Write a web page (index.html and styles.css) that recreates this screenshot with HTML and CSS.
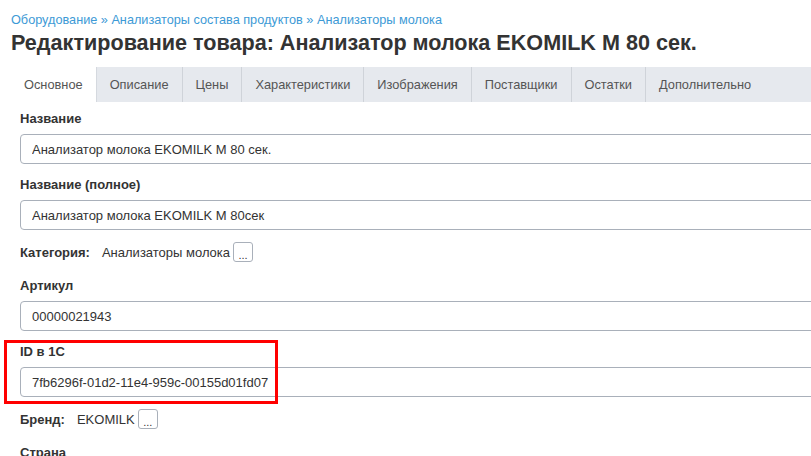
FILE: index.html
```html
<!DOCTYPE html>
<html lang="ru">
<head>
    <meta charset="UTF-8">
    <title>Редактирование товара</title>
    <link rel="stylesheet" href="styles.css">
</head>
<body>
    <div class="page">
        <div class="crumbs">
            <a href="#">Оборудование</a> &raquo; <a href="#">Анализаторы состава продуктов</a> &raquo; <a href="#">Анализаторы молока</a>
        </div>
        <h1>Редактирование товара: Анализатор молока EKOMILK M 80 сек.</h1>
        <ul class="tabs">
            <li class="active">Основное</li>
            <li>Описание</li>
            <li>Цены</li>
            <li>Характеристики</li>
            <li>Изображения</li>
            <li>Поставщики</li>
            <li>Остатки</li>
            <li>Дополнительно</li>
        </ul>
        <div class="form">
            <div class="field">
                <label>Название</label>
                <input type="text" value="Анализатор молока EKOMILK M 80 сек.">
            </div>
            <div class="field">
                <label>Название (полное)</label>
                <input type="text" value="Анализатор молока EKOMILK M 80сек">
            </div>
            <div class="row">
                <b>Категория:</b>
                <span>Анализаторы молока</span>
                <button>...</button>
            </div>
            <div class="field">
                <label>Артикул</label>
                <input type="text" value="00000021943">
            </div>
            <div class="field marked">
                <label>ID в 1C</label>
                <input type="text" value="7fb6296f-01d2-11e4-959c-00155d01fd07">
                <div class="mark"></div>
            </div>
            <div class="row">
                <b>Бренд:</b>
                <span>EKOMILK</span>
                <button>...</button>
            </div>
            <div class="field">
                <label>Страна</label>
            </div>
        </div>
    </div>
</body>
</html>
```

FILE: styles.css
```css
body{
    margin: 0;
    font-family: "Liberation Sans", Arial, sans-serif;
    color: #333;
    background: #fff;
    overflow: hidden;
}
.page{
    padding: 13px 0 0 11px;
}
.crumbs{
    font-size: 12.7px;
    line-height: 15px;
    color: #3d9ad6;
}
.crumbs a{
    color: #3d9ad6;
    text-decoration: none;
}
h1{
    margin: 2px 0 0;
    font-size: 21.6px;
    line-height: 26px;
    color: #333;
}
.tabs{
    list-style: none;
    margin: 11px 0 0;
    padding: 0;
    display: flex;
    height: 35px;
    background: #e6e9ee;
}
.tabs li{
    padding: 0 13px;
    font-size: 12.8px;
    line-height: 35px;
    color: #555;
    border-right: 1px solid #cfd3d9;
}
.tabs li.active{
    background: #fff;
    padding: 0 13px 0 13px;
    border-right: 1px solid #d5d9df;
}
.tabs li:last-child{
    border-right: none;
}
.form{
    padding: 8px 0 0 9px;
}
.field{
    margin-bottom: 12px;
}
.field label{
    display: block;
    font-size: 13px;
    font-weight: bold;
    line-height: 18px;
    margin-bottom: 6px;
}
.field input{
    display: block;
    box-sizing: border-box;
    width: 830px;
    height: 30px;
    padding: 0 11px;
    border: 1px solid #a9b0ba;
    border-radius: 4px;
    font-family: inherit;
    font-size: 13px;
    color: #333;
}
.row{
    display: flex;
    align-items: center;
    height: 20px;
    margin: 1px 0 15px;
    font-size: 13px;
}
.row b{
    margin-right: 12px;
}
.row button{
    width: 20px;
    height: 20px;
    margin-left: 3px;
    padding: 6px 0 0;
    line-height: 10px;
    border: 1px solid #a9b0ba;
    border-radius: 3px;
    background: #fff;
    font-family: inherit;
    font-size: 11px;
    color: #333;
}
.marked{
    position: relative;
}
.mark{
    position: absolute;
    left: -16px;
    top: -3px;
    width: 268px;
    height: 58px;
    border: 3px solid #f00;
}
```
